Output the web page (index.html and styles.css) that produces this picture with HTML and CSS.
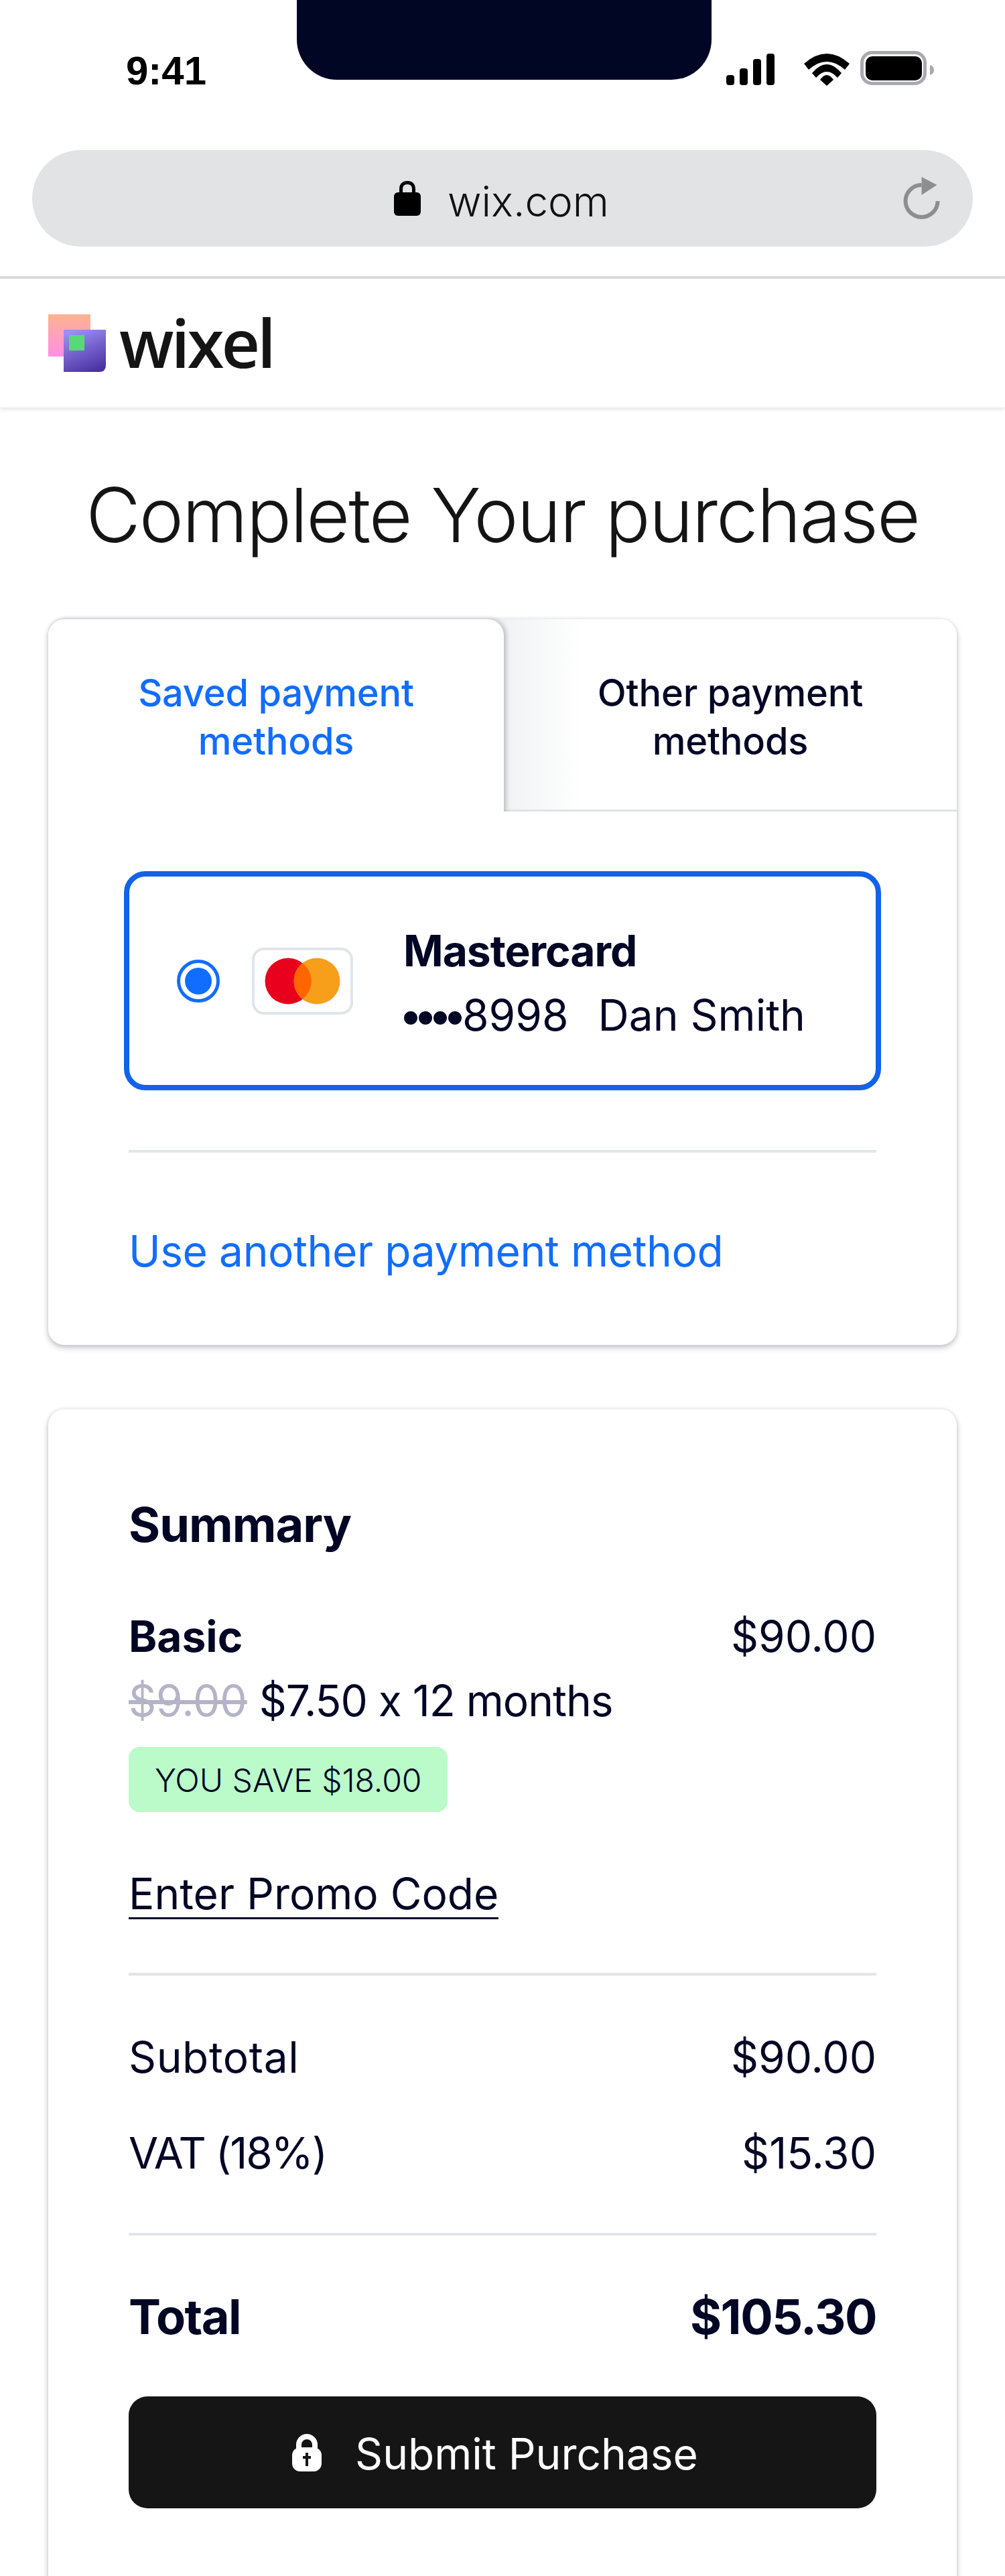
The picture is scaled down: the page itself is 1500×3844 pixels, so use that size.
FILE: index.html
```html
<!DOCTYPE html>
<html lang="en">
<head>
    <meta charset="UTF-8">
    <meta name="viewport" content="width=device-width, initial-scale=1.0">
    <title>Complete Your purchase</title>
    <link rel="stylesheet" href="styles.css">
</head>
<body>
<div class="page">
    <div class="status-bar">
        <span class="time">9:41</span>
        <div class="notch"></div>
        <svg class="status-icons" width="312" height="52" viewBox="0 0 312 52">
            <rect x="0" y="36" width="12" height="15" rx="4"/>
            <rect x="20" y="26" width="12" height="25" rx="4"/>
            <rect x="40" y="12" width="12" height="39" rx="4"/>
            <rect x="60" y="4" width="12" height="47" rx="4"/>
            <path d="M116 19 Q150 -11 184 19 L177 28 Q150 4 123 28 Z"/>
            <path d="M128 33 Q150 7 172 33 L166 40 Q150 22 134 40 Z"/>
            <path d="M140 43 Q150 29 160 43 L150 52 Z"/>
            <rect x="202.500" y="2.500" width="94" height="46" rx="15" fill="none" stroke="#a9a9b0" stroke-width="5"/>
            <rect x="208" y="8" width="84" height="36" rx="10"/>
            <path d="M304 21 C308 22 310 25 310 28.500 C310 32 308 35 304 36 Z" fill="#a9a9b0"/>
        </svg>
    </div>

    <div class="url-row">
        <div class="url-bar">
            <svg class="url-lock" width="40" height="52" viewBox="0 0 40 52">
                <path d="M10.500 20 V12 C10.500 6 14 2.500 20 2.500 C26 2.500 29.500 6 29.500 12 V20" fill="none" stroke="#000" stroke-width="5"/>
                <rect x="0" y="17" width="40" height="35" rx="6"/>
            </svg>
            <span class="url-text">wix.com</span>
            <svg class="reload" width="60" height="68" viewBox="0 0 60 68">
                <path d="M53.500 38 A24 24 0 1 1 29.500 14" fill="none" stroke="#8e8e8e" stroke-width="6"/>
                <path d="M29.500 2 L52.500 14 L29.500 29 Z" fill="#8e8e8e"/>
            </svg>
        </div>
    </div>

    <header class="site-header">
        <svg class="logo-mark" width="86" height="86" viewBox="0 0 86 86">
            <defs>
                <linearGradient id="pinkGrad" x1="0" y1="0" x2="0" y2="1">
                    <stop offset="0" stop-color="#ffb38f"/>
                    <stop offset="1" stop-color="#ff8fe6"/>
                </linearGradient>
                <linearGradient id="purpleGrad" x1="0.3" y1="0" x2="0.7" y2="1">
                    <stop offset="0" stop-color="#9b8ff2"/>
                    <stop offset="1" stop-color="#4a31a3"/>
                </linearGradient>
            </defs>
            <rect width="63" height="63" fill="url(#pinkGrad)"/>
            <path d="M23 23 H86 V76 Q86 86 76 86 H23 Z" fill="url(#purpleGrad)"/>
            <rect x="31" y="31" width="23" height="23" fill="#57d977"/>
        </svg>
        <span class="logo-text">wixel</span>
    </header>

    <h1 class="page-title">Complete Your purchase</h1>

    <section class="card pay-card">
        <div class="tabs">
            <div class="tab tab-active">Saved payment<br>methods</div>
            <div class="tab tab-other">Other payment<br>methods</div>
        </div>
        <div class="pay-body">
            <div class="saved-method">
                <span class="radio"><span class="radio-dot"></span></span>
                <svg class="card-logo" width="151" height="100" viewBox="0 0 151 100">
                    <rect x="2" y="2" width="147" height="96" rx="16" fill="#fff" stroke="#dfe5eb" stroke-width="4"/>
                    <circle cx="54" cy="50" r="34.500" fill="#e8001c"/>
                    <circle cx="97" cy="50" r="34.500" fill="#f79e1b"/>
                    <path d="M75.500 23 A34.500 34.500 0 0 1 75.500 77 A34.500 34.500 0 0 1 75.500 23 Z" fill="#ff6500"/>
                </svg>
                <div class="method-info">
                    <div class="method-name">Mastercard</div>
                    <div class="method-detail"><span><span class="dots">••••</span>8998</span><span>Dan Smith</span></div>
                </div>
            </div>
            <hr class="divider">
            <a class="another-link">Use another payment method</a>
        </div>
    </section>

    <section class="card summary-card">
        <h2 class="summary-title">Summary</h2>
        <div class="row plan-row">
            <span class="bold">Basic</span>
            <span>$90.00</span>
        </div>
        <div class="plan-price"><span class="old-price">$9.00</span> <span class="new-price">$7.50 x 12 months</span></div>
        <div class="save-badge">YOU SAVE $18.00</div>
        <a class="promo-link">Enter Promo Code</a>
        <hr class="divider promo-divider">
        <div class="row subtotal-row">
            <span class="subtotal-label">Subtotal</span>
            <span>$90.00</span>
        </div>
        <div class="row vat-row">
            <span class="vat-label">VAT (18%)</span>
            <span>$15.30</span>
        </div>
        <hr class="divider total-divider">
        <div class="row total-row">
            <span>Total</span>
            <span>$105.30</span>
        </div>
        <button class="submit-button">
            <svg width="44" height="56" viewBox="0 0 44 56">
                <path d="M10 24 V16 A12 12 0 0 1 34 16 V24" fill="none" stroke="#fff" stroke-width="8"/>
                <rect x="0" y="20" width="44" height="36" rx="12" fill="#fff"/>
                <path d="M22 28 V48 M16 35 H28" stroke="#151515" stroke-width="4"/>
            </svg>
            <span class="submit-label">Submit Purchase</span>
        </button>
    </section>
</div>
</body>
</html>
```

FILE: styles.css
```css
*{
    margin: 0px;
    box-sizing: border-box;
}
body{
    background-color: white;
    font-family: Inter, "Noto Sans", sans-serif;
    font-feature-settings: "calt" 0;
    color: #000624;
}
.page{
    width: 1500px;
    height: 3844px;
    overflow: hidden;
}

/* phone chrome */
.status-bar{
    height: 224px;
    display: flex;
    align-items: flex-start;
    padding-left: 188px;
}
.time{
    font-family: "Liberation Sans", Arial, sans-serif;
    font-weight: bold;
    font-size: 60px;
    line-height: 60px;
    width: 255px;
    margin-top: 76px;
    color: black;
}
.notch{
    width: 619px;
    height: 119px;
    background-color: #000624;
    border-radius: 0 0 60px 60px;
}
.status-icons{
    margin-top: 76px;
    margin-left: 22px;
}
.url-row{
    height: 192px;
    padding: 0 48px;
    border-bottom: 4px solid #dddddd;
}
.url-bar{
    height: 144px;
    border-radius: 72px;
    background-color: #e2e3e5;
    display: flex;
    align-items: center;
    padding-left: 540px;
    position: relative;
}
.url-lock{
    margin-right: 40px;
}
.url-text{
    font-size: 62px;
    font-weight: 300;
    color: #111;
    margin-top: 8px;
}
.reload{
    position: absolute;
    right: 46px;
    top: 38px;
}
.site-header{
    height: 192px;
    display: flex;
    align-items: center;
    padding: 0 0 0 72px;
    box-shadow: 0 3px 6px rgba(0,0,0,.1);
}
.logo-text{
    font-family: "Open Sans", sans-serif;
    font-weight: 600;
    font-size: 100px;
    letter-spacing: -4px;
    line-height: 1;
    color: #141414;
    margin-left: 20px;
    margin-top: -4px;
}
.page-title{
    font-weight: 300;
    font-size: 112px;
    line-height: 130px;
    color: #141414;
    text-align: center;
    margin-top: 95px;
    margin-bottom: 91px;
    letter-spacing: -2px;
}

/* cards */
.card{
    margin: 0 72px;
    background-color: white;
    border-radius: 24px;
    box-shadow: 0 4px 10px rgba(0,6,36,.22), 0 0 6px rgba(0,6,36,.1);
}
.tabs{
    display: grid;
    grid-template-columns: 680px 1fr;
    height: 287px;
}
.tab{
    font-size: 56px;
    line-height: 72px;
    font-weight: 500;
    letter-spacing: -0.2px;
    text-align: center;
    padding-top: 74px;
    border-radius: 24px 24px 0 0;
}
.tab-active{
    color: #116dff;
    box-shadow: 3px 0 7px rgba(0,6,36,.24);
    clip-path: inset(-10px -14px 0 0);
    background-color: white;
    position: relative;
    z-index: 1;
}
.tab-other{
    margin-left: -24px;
    padding-left: 24px;
    border-bottom: 3px solid #e0e2e5;
    background: linear-gradient(90deg, #f1f2f3 24px, #f4f5f6 50px, white 140px);
    border-top-left-radius: 0;
}
.pay-body{
    padding: 89px 120px 0;
    height: 796px;
}
.saved-method{
    margin: 0 -7px;
    height: 327px;
    border: 8px solid #1163e8;
    border-radius: 32px;
    display: flex;
    align-items: center;
    padding-left: 71px;
}
.radio{
    width: 64px;
    height: 64px;
    border: 5px solid #116dff;
    border-radius: 50%;
    display: flex;
    align-items: center;
    justify-content: center;
}
.radio-dot{
    width: 40px;
    height: 40px;
    border-radius: 50%;
    background-color: #116dff;
}
.card-logo{
    margin-left: 48px;
}
.method-info{
    margin-left: 75px;
    padding-top: 6px;
}
.method-name{
    font-size: 64px;
    line-height: 96px;
    font-weight: 700;
    letter-spacing: -1px;
}
.method-detail{
    font-size: 64px;
    line-height: 96px;
    display: flex;
    gap: 44px;
}
.dots{
    letter-spacing: -14px;
    margin-left: -7px;
    margin-right: 7px;
}
.divider{
    border: none;
    height: 4px;
    background-color: #dfe5eb;
}
.pay-body .divider{
    margin-top: 89px;
}
.another-link{
    display: block;
    color: #116dff;
    font-size: 64px;
    line-height: 90px;
    letter-spacing: -0.4px;
    margin-top: 102px;
}
.summary-card{
    margin-top: 96px;
    height: 1900px;
    padding: 122px 120px 0;
    font-size: 64px;
}
.summary-title{
    font-size: 72px;
    line-height: 100px;
    font-weight: 700;
    letter-spacing: -1px;
}
.row{
    display: flex;
    justify-content: space-between;
}
.bold{
    font-weight: 700;
}
.plan-row{
    line-height: 96px;
    margin-top: 69px;
}
.plan-price{
    line-height: 96px;
}
.old-price{
    color: #b3b4c6;
    text-decoration: line-through;
}
.new-price{
    letter-spacing: -1px;
}
.save-badge{
    width: fit-content;
    margin-top: 21px;
    background-color: #bafbc9;
    border-radius: 16px;
    padding: 2px 39px 0;
    font-size: 48px;
    line-height: 95px;
    font-weight: 300;
}
.promo-link{
    display: block;
    width: fit-content;
    line-height: 70px;
    margin-top: 87px;
    border-bottom: 3px solid #000624;
}
.promo-divider{
    margin-top: 80px;
}
.subtotal-row{
    margin-top: 74px;
    line-height: 96px;
}
.subtotal-label{
    letter-spacing: 0.6px;
}
.vat-row{
    margin-top: 47px;
    line-height: 96px;
}
.vat-label{
    letter-spacing: -2px;
}
.total-divider{
    margin-top: 71px;
}
.total-row{
    font-size: 72px;
    font-weight: 700;
    line-height: 100px;
    letter-spacing: -1.5px;
    margin-top: 71px;
}
.submit-button{
    margin-top: 69px;
    width: 100%;
    height: 167px;
    background-color: #151515;
    color: white;
    border: none;
    border-radius: 28px;
    font-family: inherit;
    font-size: 64px;
    display: flex;
    align-items: center;
    justify-content: center;
    gap: 50px;
    padding: 0 22px 0 0;
}
.submit-label{
    margin-top: 4px;
}
```
